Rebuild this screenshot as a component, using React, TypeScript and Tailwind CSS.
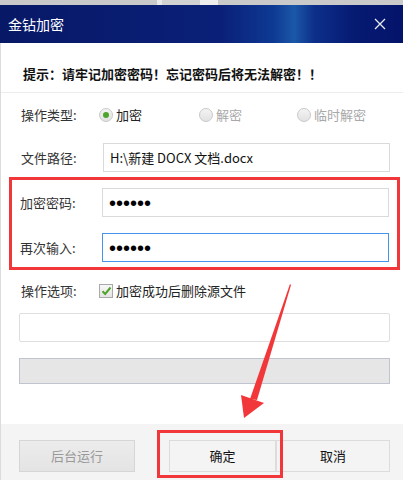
import React from 'react';

const font = { fontFamily: '"Noto Sans CJK SC", "Microsoft YaHei", sans-serif' };

function Radio({ checked, disabled, label }: { checked?: boolean; disabled?: boolean; label: string }) {
    return (
        <div className="flex items-center gap-[3px]">
            <span className="flex h-[14px] w-[14px] items-center justify-center rounded-full border border-[#c9c9c9] bg-gradient-to-b from-[#f4f4f4] to-[#e2e2e2]">
                {checked && <span className="h-[6px] w-[6px] rounded-full bg-[#4fa42a]" />}
            </span>
            <span className={disabled ? 'text-[#a8a8a8]' : 'text-[#222]'}>{label}</span>
        </div>
    );
}

function Field({ label, children }: { label: string; children: React.ReactNode }) {
    return (
        <div className="flex items-center">
            <span className="w-[82px] text-[#333]">{label}</span>
            {children}
        </div>
    );
}

export default function App() {
    return (
        <div className="relative h-[480px] w-[407px] overflow-hidden bg-white text-[13px]" style={font}>
            <div className="w-[403px]">
                {/* strip of the window behind */}
                <div className="flex h-[5px] bg-[#cfcfcf]">
                    <div className="w-[157px] bg-[#c9c9c9]" />
                    <div className="w-[5px] bg-[#e9e9e9]" />
                    <div className="w-[38px] bg-[#d2d2d2]" />
                    <div className="w-[18px] bg-[#eeeeee]" />
                    <div className="flex-1 bg-[#cacaca]" />
                </div>

                {/* title bar */}
                <div className="flex h-[38px] items-center justify-between bg-[linear-gradient(to_right,#071866_0%,#0a2078_55%,#0e3a94_68%,#1b58a8_73%,#0c2f8a_78%,#061a72_88%,#04136a_100%)] pl-[8px] pr-[17px]">
                    <span className="text-[14px] text-white">金钻加密</span>
                    <svg width="12" height="12" viewBox="0 0 12 12" className="text-[#e8ecf6]">
                        <path d="M1 1 L11 11 M11 1 L1 11" stroke="currentColor" strokeWidth="1.3" />
                    </svg>
                </div>

                {/* body */}
                <div className="border-l border-[#dcdcdc]">
                    <div className="flex h-[50px] items-center border-b border-[#ececec] pl-[22px] pt-[12px] font-bold text-[#111]">
                        提示：请牢记加密密码！忘记密码后将无法解密！！
                    </div>

                    <div className="mt-[10px] flex h-[24px] items-center pl-[20px]">
                        <span className="w-[78px] text-[#333]">操作类型:</span>
                        <div className="w-[100px]"><Radio checked label="加密" /></div>
                        <div className="w-[98px]"><Radio disabled label="解密" /></div>
                        <Radio disabled label="临时解密" />
                    </div>

                    <div className="mt-[16px] pl-[20px]">
                        <Field label="文件路径:">
                            <div className="flex h-[29px] w-[287px] items-center border border-[#dadada] px-[6px] text-[#111]">
                                H:\新建 DOCX 文档.docx
                            </div>
                        </Field>
                    </div>

                    {/* highlighted password rows */}
                    <div className="ml-[8px] mr-[3px] mt-[5px] flex flex-col gap-[16px] border-[3px] border-[#f2373b] pb-[5px] pl-[8px] pr-[7px] pt-[8px]">
                        <Field label="加密密码:">
                            <div className="flex h-[29px] w-[287px] items-center border border-[#dadada] px-[6px] text-[20px] leading-none text-black" style={{ fontFamily: '"Liberation Sans", sans-serif' }}>
                                ••••••
                            </div>
                        </Field>
                        <Field label="再次输入:">
                            <div className="flex h-[29px] w-[287px] items-center border border-[#4595ec] px-[6px] text-[20px] leading-none text-black" style={{ fontFamily: '"Liberation Sans", sans-serif' }}>
                                ••••••
                            </div>
                        </Field>
                    </div>

                    <div className="mt-[11px] flex h-[20px] items-center pl-[20px]">
                        <span className="w-[78px] text-[#333]">操作选项:</span>
                        <span className="mr-[3px] flex h-[14px] w-[14px] items-center justify-center border border-[#a9a9a9] bg-gradient-to-b from-[#f8f8f8] to-[#e4e4e4]">
                            <svg width="11" height="10" viewBox="0 0 11 10">
                                <path d="M1.5 5.2 L4.2 8 L9.5 1.5" fill="none" stroke="#4fa42a" strokeWidth="2" />
                            </svg>
                        </span>
                        <span className="text-[#222]">加密成功后删除源文件</span>
                    </div>

                    <div className="ml-[18px] mt-[12px] h-[29px] w-[371px] rounded-[2px] border border-[#dedede]" />
                    <div className="ml-[18px] mt-[16px] h-[26px] w-[371px] border border-[#c0c4d0] bg-[#e6e6e6]" />

                    {/* footer */}
                    <div className="mt-[40px] flex h-[56px] items-start bg-[#f4f4f4] pl-[18px] pt-[16px]">
                        <button className="h-[32px] w-[116px] border border-[#d6d6d6] bg-gradient-to-b from-[#ececec] to-[#e4e4e4] text-[#9a9a9a]">
                            后台运行
                        </button>
                        <button className="ml-[34px] h-[32px] w-[107px] border border-[#dcdcdc] bg-[#f4f4f4] text-[#111]">
                            确定
                        </button>
                        <button className="h-[32px] w-[114px] border border-[#dcdcdc] bg-[#f4f4f4] text-[#111]">
                            取消
                        </button>
                    </div>
                </div>
            </div>

            {/* annotation: box around confirm button */}
            <div className="absolute left-[157px] top-[430px] h-[48px] w-[126px] border-[3px] border-[#f2373b]" />

            {/* annotation: arrow */}
            <svg className="pointer-events-none absolute left-0 top-0" width="407" height="480" viewBox="0 0 407 480">
                <path d="M290 284 L291 285 L257 400 L250 399 Z" fill="#f2373b" />
                <path d="M241 395 L264 403 L244 418 Z" fill="#f2373b" />
            </svg>
        </div>
    );
}
